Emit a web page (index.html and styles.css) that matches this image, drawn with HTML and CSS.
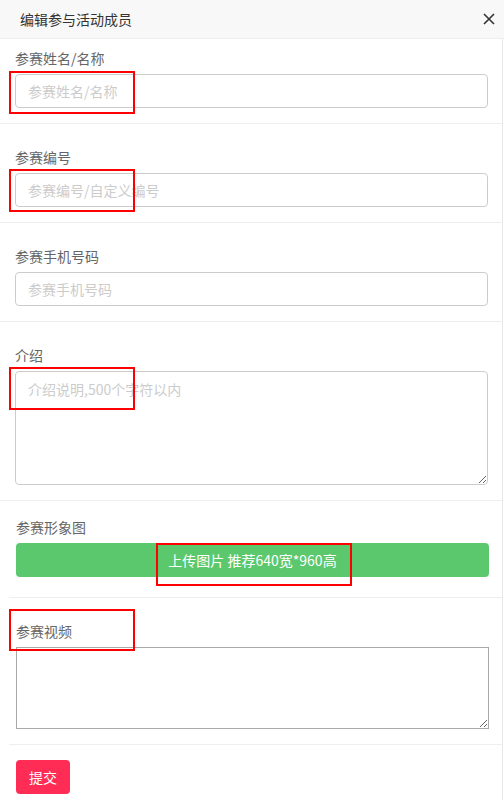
FILE: index.html
```html
<!DOCTYPE html>
<html lang="zh-CN">
<head>
  <meta charset="UTF-8" />
  <meta name="viewport" content="width=device-width, initial-scale=1.0" />
  <title>编辑参与活动成员</title>
  <link rel="stylesheet" href="styles.css">
</head>
<body>

  <div class="modal-head">
    <span class="modal-title">编辑参与活动成员</span>
    <span class="modal-close">
      <svg width="12" height="12" viewBox="0 0 12 12">
        <path d="M1 1 L11 11 M11 1 L1 11" stroke="#333" stroke-width="1.6" fill="none" />
      </svg>
    </span>
  </div>

  <form class="modal-body" onsubmit="return false">
    <div class="field first">
      <label>参赛姓名/名称</label>
      <input type="text" placeholder="参赛姓名/名称">
    </div>

    <div class="field">
      <label>参赛编号</label>
      <input type="text" placeholder="参赛编号/自定义编号">
    </div>

    <div class="field">
      <label>参赛手机号码</label>
      <input type="text" placeholder="参赛手机号码">
    </div>

    <div class="field">
      <label>介绍</label>
      <textarea class="intro" placeholder="介绍说明,500个字符以内"></textarea>
    </div>

    <div class="field upload img-upload">
      <label>参赛形象图</label>
      <button type="button" class="btn-upload">上传图片 推荐640宽*960高</button>
    </div>

    <div class="field upload">
      <label>参赛视频</label>
      <textarea class="video"></textarea>
    </div>

    <div class="actions">
      <button type="submit" class="btn-submit">提交</button>
    </div>
  </form>

  <!-- red marks on the screenshot -->
  <div class="mark mark-1"></div>
  <div class="mark mark-2"></div>
  <div class="mark mark-3"></div>
  <div class="mark mark-4"></div>
  <div class="mark mark-5"></div>

</body>
</html>
```

FILE: styles.css
```css
* {
  box-sizing: border-box;
}

body {
  margin: 0;
  padding: 0;
  background: #fff;
  font-family: "Noto Sans CJK SC", "Noto Sans", sans-serif;
  font-size: 14px;
  color: #333;
  position: relative;
  width: 504px;
  height: 800px;
  overflow: hidden;
}

.modal-head {
  height: 39px;
  background: #f8f8f8;
  border-bottom: 1px solid #eee;
  display: flex;
  align-items: center;
  justify-content: space-between;
  padding: 0 4px 0 20px;
}

.modal-title {
  font-size: 14px;
  color: #333;
  line-height: 20px;
}

.modal-close {
  display: flex;
  width: 12px;
  height: 12px;
  margin-right: 5px;
}

.modal-body {
  width: 503px;
  border-right: 1px solid #e8e8e8;
  height: 761px;
}

.field {
  padding: 23px 14px 15px 15px;
  border-bottom: 1px solid #eee;
}

.field.first {
  padding-top: 9px;
}

.field label {
  display: block;
  line-height: 20px;
  font-size: 14px;
  color: #666;
  margin-bottom: 6px;
}

.field input,
.field textarea.intro {
  display: block;
  width: 100%;
  height: 34px;
  padding: 6px 12px;
  border: 1px solid #ccc;
  border-radius: 4px;
  font-family: inherit;
  font-size: 14px;
  line-height: 20px;
  color: #333;
  outline: none;
}

.field textarea.intro {
  height: 114px;
  padding-top: 7px;
}

.field input::placeholder,
.field textarea::placeholder {
  color: #ccc;
}

.field.upload {
  margin-left: 9px;
  padding: 23px 13px 15px 7px;
}

.field.img-upload {
  padding-top: 16px;
  padding-bottom: 20px;
}

.btn-upload {
  display: block;
  width: 100%;
  height: 34px;
  background: #5cc86e;
  color: #fff;
  border: none;
  border-radius: 4px;
  font-family: inherit;
  font-size: 14px;
  cursor: pointer;
}

.field textarea.video {
  display: block;
  width: 100%;
  height: 82px;
  border: 1px solid #a9a9a9;
  border-radius: 0;
  font-family: inherit;
  outline: none;
}

.actions {
  padding: 15px 0 0 16px;
}

.btn-submit {
  width: 54px;
  height: 34px;
  background: #ff2d55;
  color: #fff;
  border: none;
  border-radius: 4px;
  font-family: inherit;
  font-size: 14px;
  cursor: pointer;
}

.mark {
  position: absolute;
  border: 2px solid #f00;
  pointer-events: none;
}

.mark-1 { left: 9px; top: 71px; width: 126px; height: 43px; }
.mark-2 { left: 9px; top: 169px; width: 126px; height: 43px; }
.mark-3 { left: 9px; top: 367px; width: 126px; height: 43px; }
.mark-4 { left: 156px; top: 543px; width: 196px; height: 43px; }
.mark-5 { left: 9px; top: 609px; width: 126px; height: 42px; }
```
